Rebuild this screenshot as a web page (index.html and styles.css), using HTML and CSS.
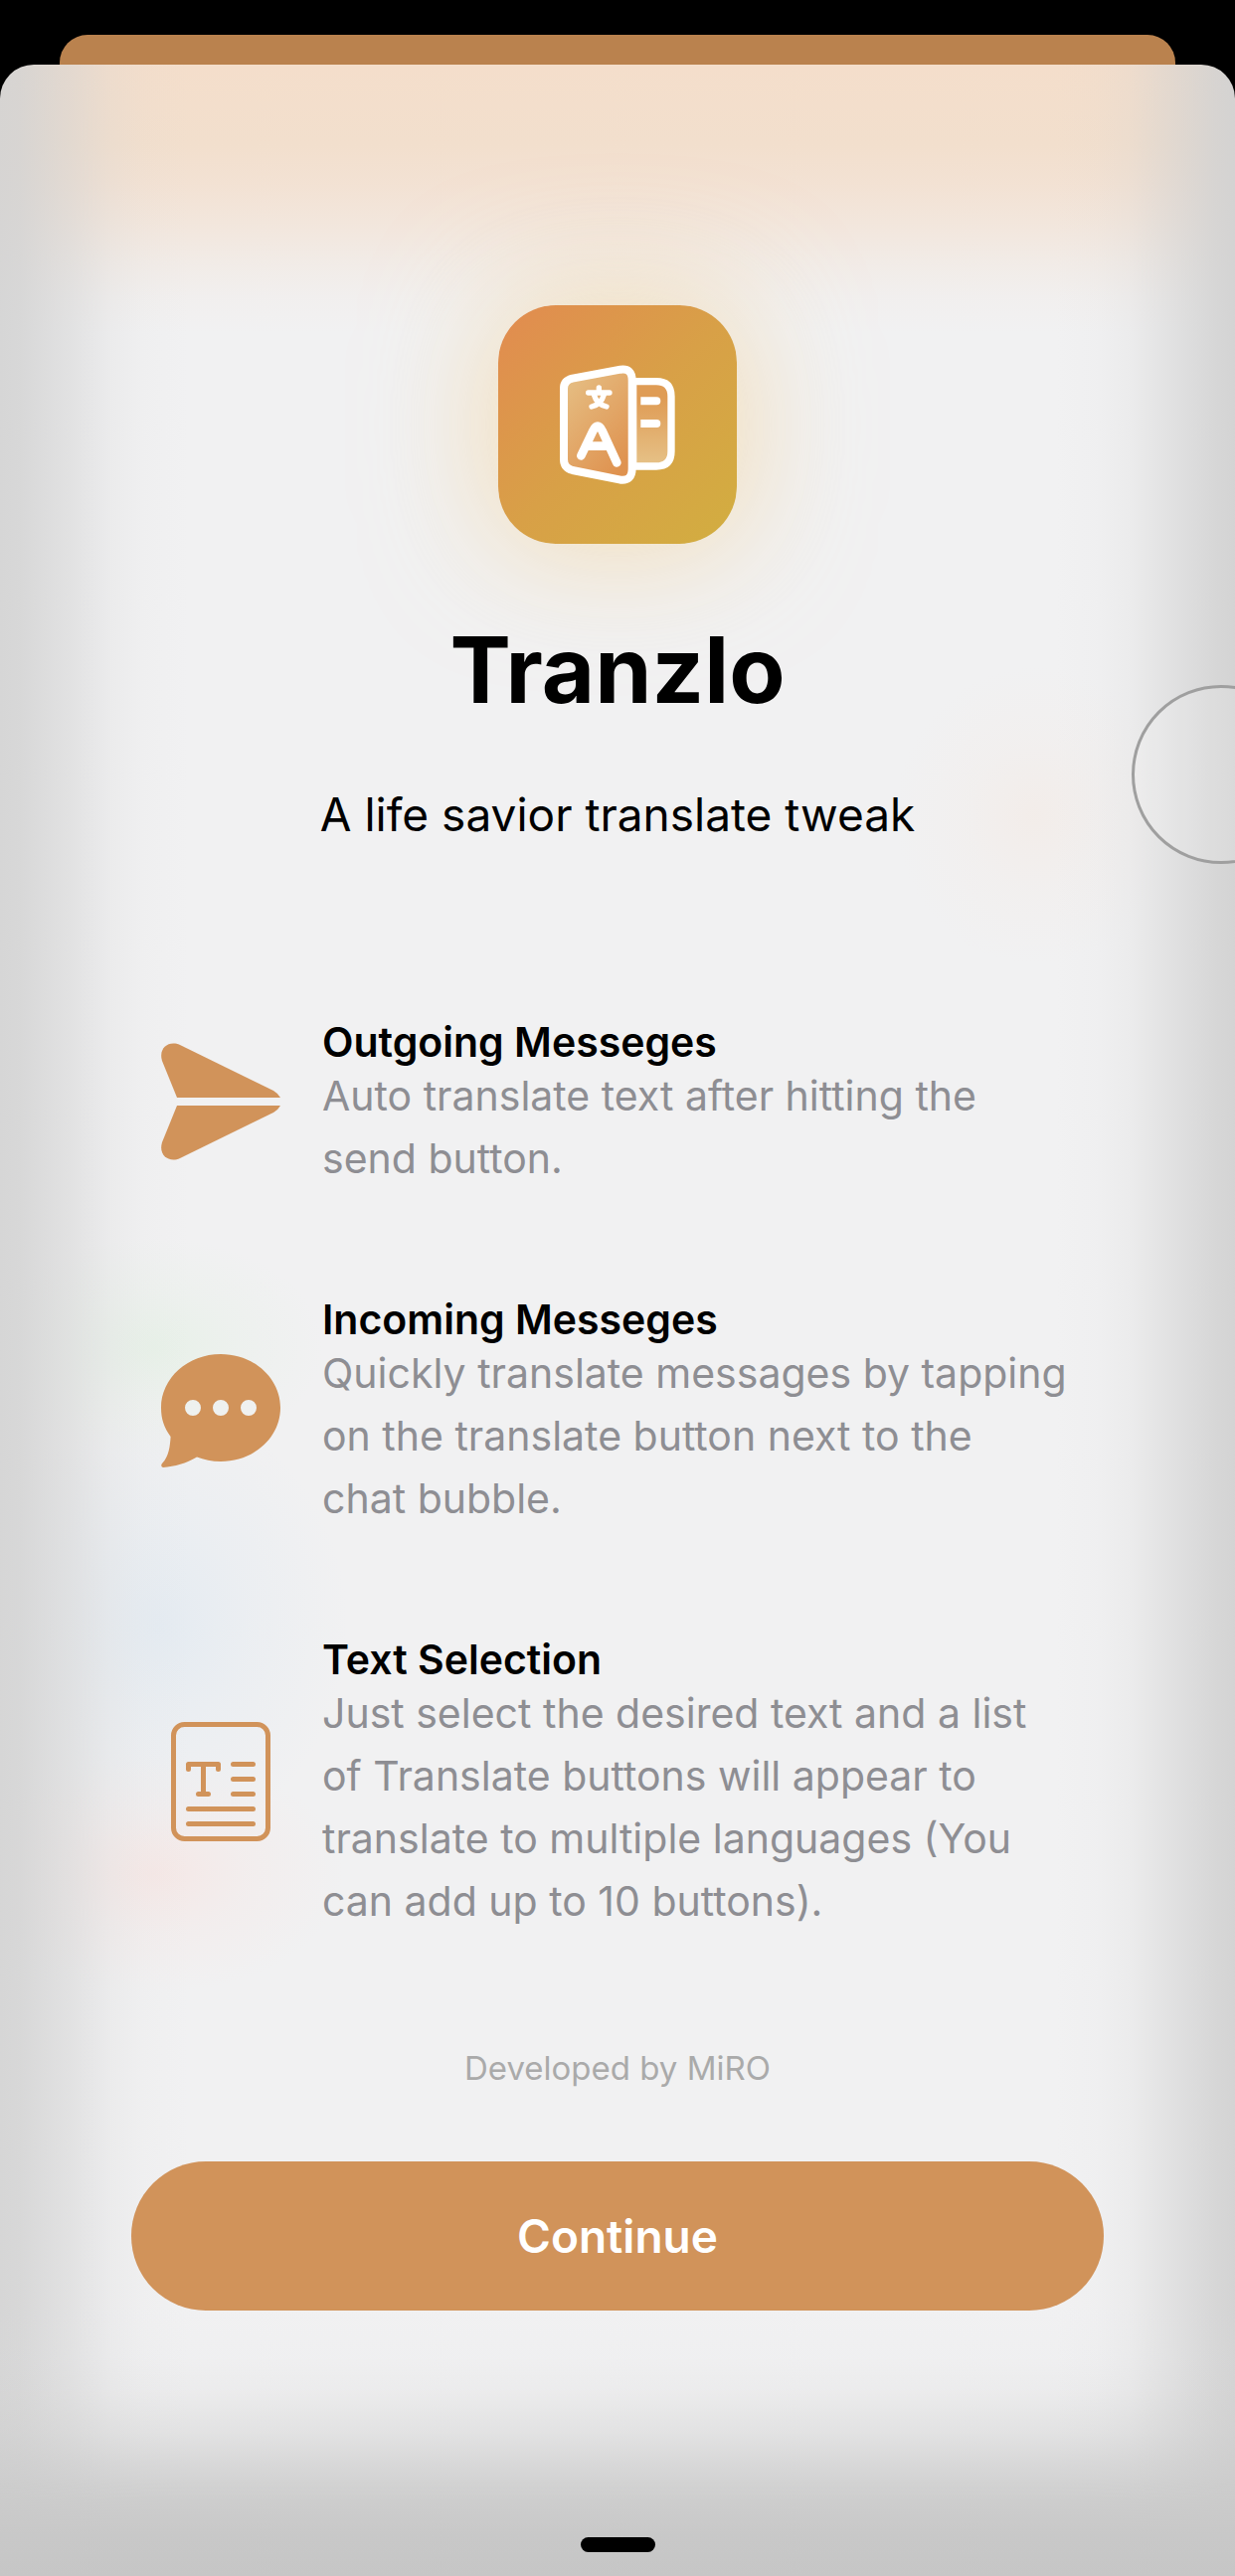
FILE: index.html
```html
<!DOCTYPE html>
<html lang="en">
<head>
<meta charset="utf-8">
<meta name="viewport" content="width=device-width, initial-scale=1">
<title>Tranzlo</title>
<link rel="stylesheet" href="styles.css">
</head>
<body>
<div class="back-card"></div>
<main class="sheet">
  <svg class="app-icon" viewBox="243 111 720 720" aria-hidden="true">
    <defs>
      <linearGradient id="tile" x1="0" y1="0" x2="1" y2="1">
        <stop offset="0" stop-color="#e28b50"/>
        <stop offset="0.5" stop-color="#d8a047"/>
        <stop offset="1" stop-color="#d2ae40"/>
      </linearGradient>
      <linearGradient id="front" x1="0" y1="0" x2="0.7" y2="1">
        <stop offset="0" stop-color="#e6c288"/>
        <stop offset="1" stop-color="#df924f"/>
      </linearGradient>
      <linearGradient id="rear" x1="0" y1="0" x2="0" y2="1">
        <stop offset="0.2" stop-color="#df9c55"/>
        <stop offset="1" stop-color="#e6c288"/>
      </linearGradient>
    </defs>
    <path fill="url(#tile)" d="M415 111H791C900 111 963 174 963 283V659C963 768 900 831 791 831H415C306 831 243 768 243 659V283C243 174 306 111 415 111Z"/>
    <g stroke="#fff" stroke-linecap="round" stroke-linejoin="round">
      <path fill="url(#rear)" stroke-width="22" d="M650 341H720Q765 341 765 386V552Q765 597 720 597H650Z"/>
      <path fill="url(#front)" stroke-width="24" d="M441 362Q441 338 467 332L612 305Q647 300 647 338V604Q647 642 612 638L467 609Q441 602 441 576Z"/>
      <path fill="none" stroke-width="26" d="M493 565L529 490Q543 462 557 490L601 586M514 536H574"/>
      <path fill="none" stroke-width="16" d="M515 375H579M547 360V373M532 381Q540 410 570 417M562 381Q554 410 525 417"/>
    </g>
    <path fill="#fff" d="M673 388h48a12 12 0 0 1 0 24h-48zM673 456h48a12 12 0 0 1 0 24h-48z"/>
  </svg>
  <h1 class="title">Tranzlo</h1>
  <p class="subtitle">A life savior translate tweak</p>

  <ul class="features">
    <li class="feature">
      <svg class="feature-icon" viewBox="0 0 120 118" width="120" height="118" aria-hidden="true">
        <path d="M16 55L1 18C-3 5 8 -3 19 2L113 48Q118 51 120 55Z"/>
        <path d="M16 63L1 100C-3 113 8 121 19 116L113 70Q118 67 120 63Z"/>
      </svg>
      <div class="feature-text">
        <h2 class="feature-title">Outgoing Messeges</h2>
        <p class="feature-desc">Auto translate text after hitting the send button.</p>
      </div>
    </li>
    <li class="feature">
      <svg class="feature-icon" viewBox="0 0 120 114" width="120" height="114" aria-hidden="true">
        <path fill-rule="evenodd" d="M60 0C93 0 120 24 120 54S93 108 60 108C51 108 43 106 36 103.500C25 110 14 113 2 114Q-1 113 1 110C8 103 9 92 9.600 83C3 74 0 65 0 54C0 24 27 0 60 0ZM24 54a8 8 0 1 0 16 0a8 8 0 1 0 -16 0ZM52 54a8 8 0 1 0 16 0a8 8 0 1 0 -16 0ZM80 54a8 8 0 1 0 16 0a8 8 0 1 0 -16 0Z"/>
      </svg>
      <div class="feature-text">
        <h2 class="feature-title">Incoming Messeges</h2>
        <p class="feature-desc">Quickly translate messages by tapping on the translate button next to the chat&nbsp;bubble.</p>
      </div>
    </li>
    <li class="feature">
      <svg class="feature-icon feature-icon-line" viewBox="-10 0 120 120" width="120" height="120" aria-hidden="true">
        <rect x="2.500" y="2.500" width="95" height="115" rx="11"/>
        <path d="M17.500 47.500V42.500H47.500V47.500M32.500 42.500V72.500M27.500 72.500H37.500M62.500 42.500H82.500M62.500 57.500H82.500M62.500 72.500H82.500M17.500 87.500H82.500M17.500 102.500H82.500"/>
      </svg>
      <div class="feature-text">
        <h2 class="feature-title">Text Selection</h2>
        <p class="feature-desc">Just select the desired text and a list of Translate buttons will appear to translate to multiple languages (You can add up to 10 buttons).</p>
      </div>
    </li>
  </ul>

  <p class="credit">Developed by MiRO</p>
  <button class="continue" type="button">Continue</button>
  <div class="home-indicator"></div>
  <div class="touch-ring"></div>
</main>
</body>
</html>
```
FILE: styles.css
```css
* {
  box-sizing: border-box;
}

body {
  margin: 0;
  padding-top: 35px;
  background: #000;
  color: #000;
  font-family: Inter, "Liberation Sans", sans-serif;
}

h1, h2, p, ul {
  margin: 0;
  padding: 0;
}

.back-card {
  height: 30px;
  margin: 0 60px;
  border-radius: 28px 28px 0 0;
  background: #ba824e;
}

.sheet {
  position: relative;
  display: flex;
  flex-direction: column;
  align-items: center;
  padding: 242px 132px 24px;
  overflow: hidden;
  border-radius: 34px 34px 0 0;
  background:
    linear-gradient(to top, #c6c6c6 0, #c8c8c8 40px, rgba(202, 202, 202, 0.92) 75px, rgba(204, 204, 204, 0.7) 110px, rgba(206, 206, 206, 0.42) 145px, rgba(210, 210, 210, 0.18) 185px, rgba(220, 220, 224, 0.08) 220px, rgba(230, 230, 234, 0) 270px),
    linear-gradient(to right, rgba(211, 211, 211, 0.9) 0, rgba(211, 211, 211, 0.85) 20px, rgba(211, 211, 211, 0.48) 75px, rgba(211, 211, 211, 0.2) 110px, rgba(211, 211, 211, 0.06) 145px, rgba(211, 211, 211, 0) 190px),
    linear-gradient(to left, rgba(210, 210, 210, 0.95) 0, rgba(210, 210, 210, 0.85) 20px, rgba(210, 210, 210, 0.5) 65px, rgba(210, 210, 210, 0.18) 105px, rgba(210, 210, 210, 0.05) 140px, rgba(210, 210, 210, 0) 180px),
    radial-gradient(170px 110px at 155px 1290px, rgba(222, 240, 222, 0.5), rgba(222, 240, 222, 0.2) 50%, rgba(222, 240, 222, 0)),
    radial-gradient(190px 220px at 160px 1570px, rgba(220, 231, 241, 0.6), rgba(220, 231, 241, 0.25) 50%, rgba(220, 231, 241, 0)),
    radial-gradient(190px 120px at 155px 1820px, rgba(248, 224, 220, 0.55), rgba(248, 224, 220, 0.2) 50%, rgba(248, 224, 220, 0)),
    radial-gradient(140px 150px at 1040px 755px, rgba(245, 230, 220, 0.4), rgba(245, 230, 220, 0.15) 50%, rgba(245, 230, 220, 0)),
    linear-gradient(to bottom, #f4decb 0, #f2dfcd 80px, rgba(243, 223, 206, 0.85) 120px, rgba(243, 223, 206, 0.6) 160px, rgba(243, 223, 206, 0.3) 200px, rgba(243, 223, 206, 0.1) 235px, rgba(243, 223, 206, 0) 270px),
    #f1f1f2;
}

.app-icon {
  width: 240px;
  height: 240px;
  border-radius: 58px;
  box-shadow: 0 0 120px 10px rgba(246, 208, 140, 0.55);
}

.title {
  margin-top: 69px;
  font-size: 92px;
  line-height: 116px;
  font-weight: 700;
}

.subtitle {
  margin-top: 57px;
  font-size: 46px;
  line-height: 60px;
}

.features {
  display: flex;
  flex-direction: column;
  gap: 107px;
  align-self: stretch;
  margin-top: 176px;
  padding: 0 30px;
  list-style: none;
}

.feature {
  display: flex;
  align-items: center;
  gap: 42px;
}

.feature-icon {
  flex: none;
  margin-bottom: 6px;
  fill: #d1935a;
}

.feature-icon-line {
  fill: none;
  stroke: #d1935a;
  stroke-width: 5px;
  stroke-linecap: round;
  stroke-linejoin: round;
}

.feature-text {
  flex: 1;
}

.feature-title {
  font-size: 41px;
  line-height: 46px;
  font-weight: 600;
}

.feature-desc {
  color: #8e8e93;
  font-size: 41px;
  line-height: 63px;
}

.credit {
  margin-top: 116px;
  color: #aaa;
  font-size: 33px;
  line-height: 40px;
}

.continue {
  align-self: stretch;
  height: 150px;
  margin-top: 74px;
  border: 0;
  border-radius: 75px;
  background: #d1935a;
  color: #fff;
  font-family: inherit;
  font-size: 46px;
  font-weight: 600;
}

.home-indicator {
  width: 75px;
  height: 15px;
  margin-top: 228px;
  border-radius: 8px;
  background: #000;
}

.touch-ring {
  position: absolute;
  top: 624px;
  right: -76px;
  width: 180px;
  height: 180px;
  border: 3px solid #9f9f9f;
  border-radius: 50%;
  background: rgba(255, 255, 255, 0.15);
}
```
